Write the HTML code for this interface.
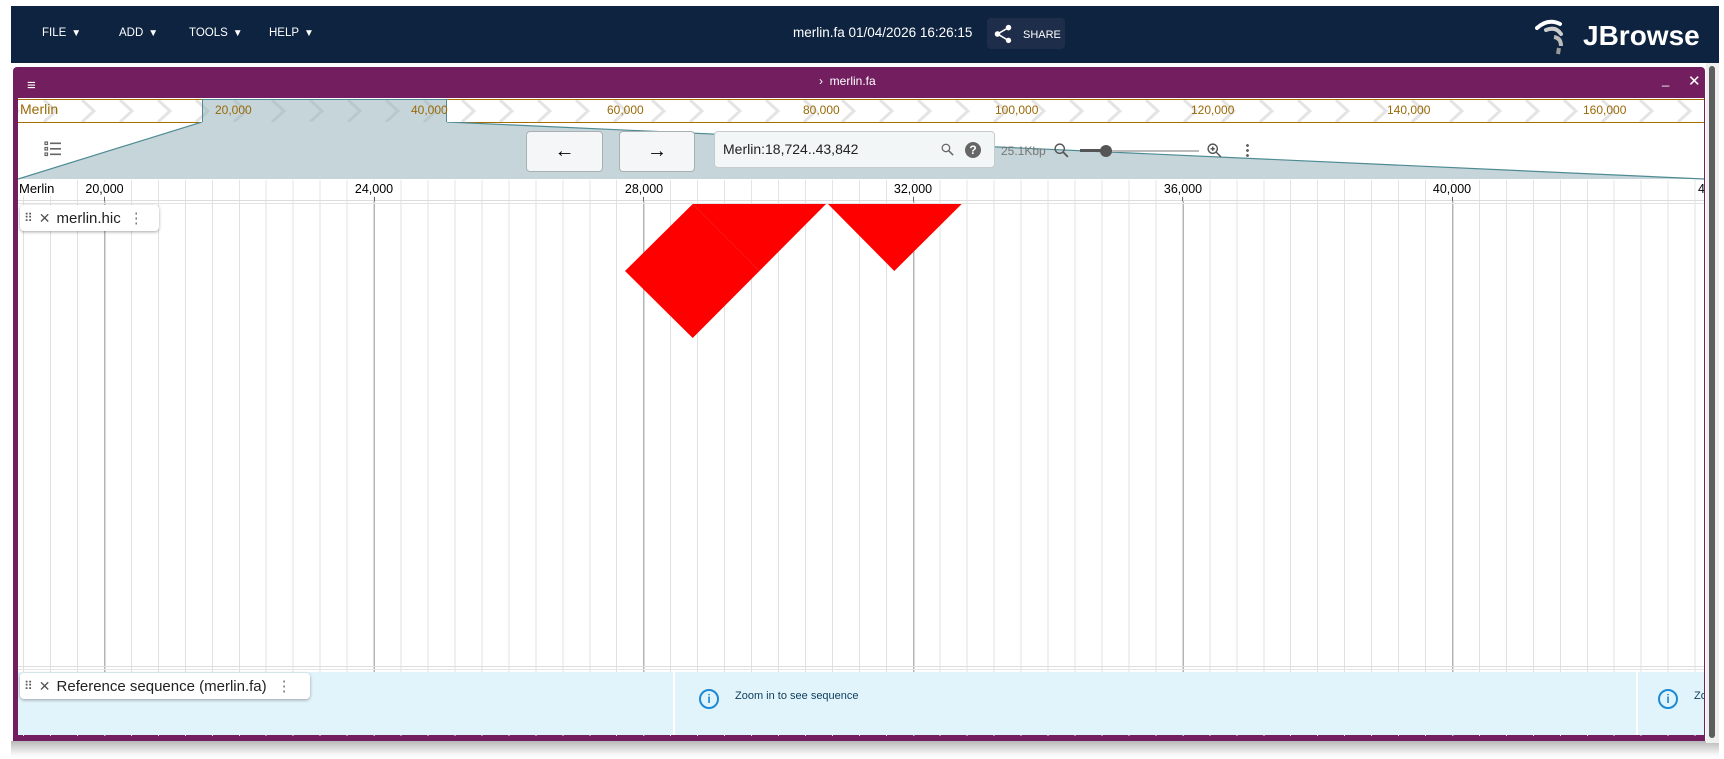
<!DOCTYPE html>
<html><head><meta charset="utf-8"><style>
*{box-sizing:border-box;margin:0;padding:0}
body{width:1724px;height:759px;background:#fff;position:relative;overflow:hidden;font-family:"Liberation Sans",sans-serif}
.a{position:absolute}
.menu{color:#fff;font-size:11.5px;top:27px}
.menu span{font-size:10px;margin-left:5px}
.ov{color:#9a6a08;font-size:12px;top:103px}
.rl{color:#000;font-size:12.5px;top:182px;transform:translateX(-50%)}
.tick{width:1px;height:4px;background:#666;top:197px}
.lbl{background:#fff;border-radius:4px;box-shadow:0 1px 3px rgba(0,0,0,.35);height:26px;display:flex;align-items:center;font-size:15px;color:#222}
.btn{background:#f4f6f7;border:1px solid #a9b0b3;border-radius:4px;display:flex;align-items:center;justify-content:center}
</style></head><body>
<!-- header -->
<div class="a" style="left:11px;top:6px;width:1708px;height:57px;background:#0e2340"></div>
<div class="a menu" style="left:42px">FILE<span>▼</span></div>
<div class="a menu" style="left:119px">ADD<span>▼</span></div>
<div class="a menu" style="left:189px">TOOLS<span>▼</span></div>
<div class="a menu" style="left:269px">HELP<span>▼</span></div>
<div class="a" style="left:793px;top:25px;color:#fff;font-size:13.5px">merlin.fa 01/04/2026 16:26:15</div>
<div class="a" style="left:987px;top:18px;width:78px;height:31px;background:#1d2d4a;border-radius:4px"></div>
<svg class="a" style="left:992px;top:23px" width="22" height="22" viewBox="0 0 24 24"><path fill="#fff" d="M18 16.08c-.76 0-1.44.3-1.96.77L8.91 12.7c.05-.23.09-.46.09-.7s-.04-.47-.09-.7l7.05-4.11c.54.5 1.25.81 2.04.81 1.66 0 3-1.34 3-3s-1.34-3-3-3-3 1.34-3 3c0 .24.04.47.09.7L8.04 9.81C7.5 9.31 6.79 9 6 9c-1.66 0-3 1.34-3 3s1.34 3 3 3c.79 0 1.5-.31 2.04-.81l7.12 4.16c-.05.21-.08.43-.08.65 0 1.61 1.31 2.92 2.92 2.92s2.92-1.31 2.92-2.92-1.31-2.92-2.92-2.92z"/></svg>
<div class="a" style="left:1023px;top:29px;color:#fff;font-size:11px">SHARE</div>
<svg class="a" style="left:1534px;top:16px" width="40" height="40" viewBox="0 0 40 40"><path d="M3 12 Q14 2 26 8" stroke="#fff" stroke-width="4" fill="none" stroke-linecap="round"/><path d="M12 14 Q22 10 27 18" stroke="#ccc" stroke-width="4" fill="none" stroke-linecap="round"/><path d="M20 21 Q27 22 27 30" stroke="#bbb" stroke-width="4" fill="none"/><path d="M25 32 L24 38" stroke="#999" stroke-width="4"/></svg>
<div class="a" style="left:1583px;top:20px;color:#fff;font-size:28px;font-weight:bold;font-family:'Liberation Sans',sans-serif">JBrowse</div>
<!-- view panel -->
<div class="a" style="left:13px;top:67px;width:1692px;height:674px;background:#721e5f;border-radius:4px 4px 0 0"></div>
<div class="a" style="left:11px;top:741px;width:1708px;height:16px;background:linear-gradient(#b8b8b8,#f4f4f4 80%,#fff)"></div>
<div class="a" style="left:1706px;top:63px;width:13px;height:680px;background:#efefef"></div>
<div class="a" style="left:1709px;top:66px;width:6px;height:672px;background:#5e5e5e;border-radius:3px"></div>
<div class="a" style="left:27px;top:77px;color:#fff;font-size:15px">≡</div>
<div class="a" style="left:819px;top:74px;color:#fff;font-size:12px">›&nbsp;&nbsp;merlin.fa</div>
<div class="a" style="left:1662px;top:72px;color:#fff;font-size:13px">_</div>
<div class="a" style="left:1688px;top:72px;color:#fff;font-size:15px">✕</div>
<div class="a" style="left:18px;top:98px;width:1686px;height:637px;background:#fff"></div>
<!-- overview -->
<div class="a" style="left:18px;top:99px;width:1686px;height:24px;border-top:1px solid #a66d00;border-bottom:1px solid #a66d00;overflow:hidden">
<svg width="1686" height="22"><defs><pattern id="ch" x="60" y="0" width="38" height="22" patternUnits="userSpaceOnUse"><path d="M4 0 L16 11 L4 22" stroke="#e4e4e4" stroke-width="3" fill="none"/></pattern></defs><rect width="1686" height="22" fill="url(#ch)"/></svg></div>
<div class="a" style="left:202px;top:99px;width:245px;height:24px;background:rgba(140,172,180,.5);border:1px solid #4e8b94"></div>
<div class="a ov" style="left:20px;top:101px;font-size:14px">Merlin</div>
<div class="a ov" style="left:215px">20,000</div><div class="a ov" style="left:411px">40,000</div><div class="a ov" style="left:607px">60,000</div><div class="a ov" style="left:803px">80,000</div><div class="a ov" style="left:995px">100,000</div><div class="a ov" style="left:1191px">120,000</div><div class="a ov" style="left:1387px">140,000</div><div class="a ov" style="left:1583px">160,000</div>
<svg class="a" style="left:18px;top:122px" width="1686" height="58"><polygon points="184,0 429,0 1686,57 0,57" fill="#c5d5d9"/><path d="M184 0 L0 57 M429 0 L1686 57" stroke="#4e8b94" stroke-width="1.2"/></svg>
<!-- toolbar -->
<svg class="a" style="left:44px;top:140px" width="18" height="18" viewBox="0 0 18 18" fill="none" stroke="#666" stroke-width="1.2"><rect x="1" y="2" width="2.5" height="2.5"/><rect x="1" y="7.5" width="2.5" height="2.5"/><rect x="1" y="13" width="2.5" height="2.5"/><path d="M6 3.3h11M6 8.8h11M6 14.3h11" stroke-width="1.6"/></svg>
<div class="a btn" style="left:526px;top:131px;width:77px;height:41px;font-size:20px">←</div>
<div class="a btn" style="left:619px;top:131px;width:76px;height:41px;font-size:20px">→</div>
<div class="a" style="left:714px;top:131px;width:281px;height:37px;background:#f3f6f7;border:1px solid #c6cbcd;border-radius:4px"></div>
<div class="a" style="left:723px;top:141px;font-size:14px;color:#222">Merlin:18,724..43,842</div>
<svg class="a" style="left:940px;top:142px" width="15" height="15" viewBox="0 0 24 24"><circle cx="9.5" cy="9.5" r="6" stroke="#666" stroke-width="2" fill="none"/><path d="M14 14l7 7" stroke="#666" stroke-width="2.5"/></svg>
<div class="a" style="left:965px;top:142px;width:16px;height:16px;border-radius:50%;background:#666;color:#fff;font-size:12px;font-weight:bold;text-align:center;line-height:16px">?</div>
<div class="a" style="left:1001px;top:144px;font-size:12px;color:#777">25.1Kbp</div>
<svg class="a" style="left:1053px;top:142px" width="17" height="17" viewBox="0 0 24 24"><circle cx="9.5" cy="9.5" r="6.5" stroke="#555" stroke-width="2" fill="none"/><path d="M14 14l7 7" stroke="#555" stroke-width="2.5"/></svg>
<div class="a" style="left:1080px;top:150px;width:119px;height:2px;background:#bbb"></div>
<div class="a" style="left:1080px;top:149px;width:26px;height:3px;background:#555"></div>
<div class="a" style="left:1100px;top:145px;width:12px;height:12px;border-radius:50%;background:#555"></div>
<svg class="a" style="left:1206px;top:142px" width="17" height="17" viewBox="0 0 24 24"><circle cx="9.5" cy="9.5" r="6.5" stroke="#555" stroke-width="2" fill="none"/><path d="M14 14l7 7M9.5 6.5v6M6.5 9.5h6" stroke="#555" stroke-width="2"/></svg>
<div class="a" style="left:1246px;top:143px;width:3px;height:14px;background:radial-gradient(circle,#666 1.4px,transparent 1.5px) 0 0/3px 5px"></div>
<!-- grid -->
<div class="a" style="left:18px;top:180px;width:1686px;height:556px;background:repeating-linear-gradient(90deg,transparent 0 86px,#b4b4b4 86px 87.5px,transparent 87.5px 269.6px),repeating-linear-gradient(90deg,transparent 0 5.1px,#e0e0e0 5.1px 6.1px,transparent 6.1px 26.96px)"></div>
<div class="a" style="left:18px;top:180px;width:1686px;height:21px;background:repeating-linear-gradient(90deg,transparent 0 5.1px,#e4e4e4 5.1px 6.1px,transparent 6.1px 26.96px) #fff;border-bottom:1px solid #ddd"></div>
<div class="a" style="left:18px;top:203px;width:1686px;height:1px;background:#e4e4e4"></div>
<div class="a" style="left:18px;top:666px;width:1686px;height:1px;background:#ddd"></div>
<div class="a" style="left:18px;top:669px;width:1686px;height:1px;background:#e6e6e6"></div>
<div class="a" style="left:19px;top:181px;font-size:13px;background:#fff;padding-right:8px">Merlin</div>
<div class="a rl" style="left:104.5px;background:#fff;padding:0 3px">20,000</div><div class="a tick" style="left:104px"></div>
<div class="a rl" style="left:374px;background:#fff;padding:0 3px">24,000</div><div class="a tick" style="left:374px"></div>
<div class="a rl" style="left:644px;background:#fff;padding:0 3px">28,000</div><div class="a tick" style="left:643px"></div>
<div class="a rl" style="left:913px;background:#fff;padding:0 3px">32,000</div><div class="a tick" style="left:913px"></div>
<div class="a rl" style="left:1183px;background:#fff;padding:0 3px">36,000</div><div class="a tick" style="left:1182px"></div>
<div class="a rl" style="left:1452px;background:#fff;padding:0 3px">40,000</div><div class="a tick" style="left:1452px"></div>
<div class="a" style="left:1698px;top:182px;font-size:12.5px;width:6px;overflow:hidden;background:#fff">4</div>
<!-- hic -->
<svg class="a" style="left:0;top:0" width="1724" height="400"><polygon points="692.7,204 826,204 692.7,338 625,271" fill="#f00"/><polygon points="828,204 961.7,204 894.3,271" fill="#f00"/><path d="M692.7 204 L759.5 271" stroke="#e22" stroke-width="0.6"/></svg>
<div class="a lbl" style="left:20px;top:205px;width:139px"><span style="color:#555;font-size:12px;margin:0 6px 0 4px">⠿</span><span style="color:#555;font-size:14px;margin-right:6px">✕</span>merlin.hic<span style="color:#777;margin-left:8px">⋮</span></div>
<!-- ref seq -->
<div class="a" style="left:18px;top:672px;width:1686px;height:63px;background:#e2f4fb"></div>
<div class="a" style="left:673px;top:672px;width:2px;height:63px;background:#fff"></div>
<div class="a" style="left:1636px;top:672px;width:2px;height:63px;background:#fff"></div>
<div class="a lbl" style="left:20px;top:673px;width:290px"><span style="color:#555;font-size:12px;margin:0 6px 0 4px">⠿</span><span style="color:#555;font-size:14px;margin-right:6px">✕</span>Reference sequence (merlin.fa)<span style="color:#777;margin-left:10px">⋮</span></div>
<div class="a" style="left:699px;top:689px;width:20px;height:20px;border:2px solid #1d8ad6;border-radius:50%;color:#1d8ad6;font-size:12px;font-weight:bold;text-align:center;line-height:16px">i</div>
<div class="a" style="left:735px;top:690px;font-size:11px;color:#0c3c5a">Zoom in to see sequence</div>
<div class="a" style="left:1658px;top:689px;width:20px;height:20px;border:2px solid #1d8ad6;border-radius:50%;color:#1d8ad6;font-size:12px;font-weight:bold;text-align:center;line-height:16px">i</div>
<div class="a" style="left:1694px;top:690px;font-size:11px;color:#0c3c5a;width:10px;overflow:hidden">Zo</div>
</body></html>
